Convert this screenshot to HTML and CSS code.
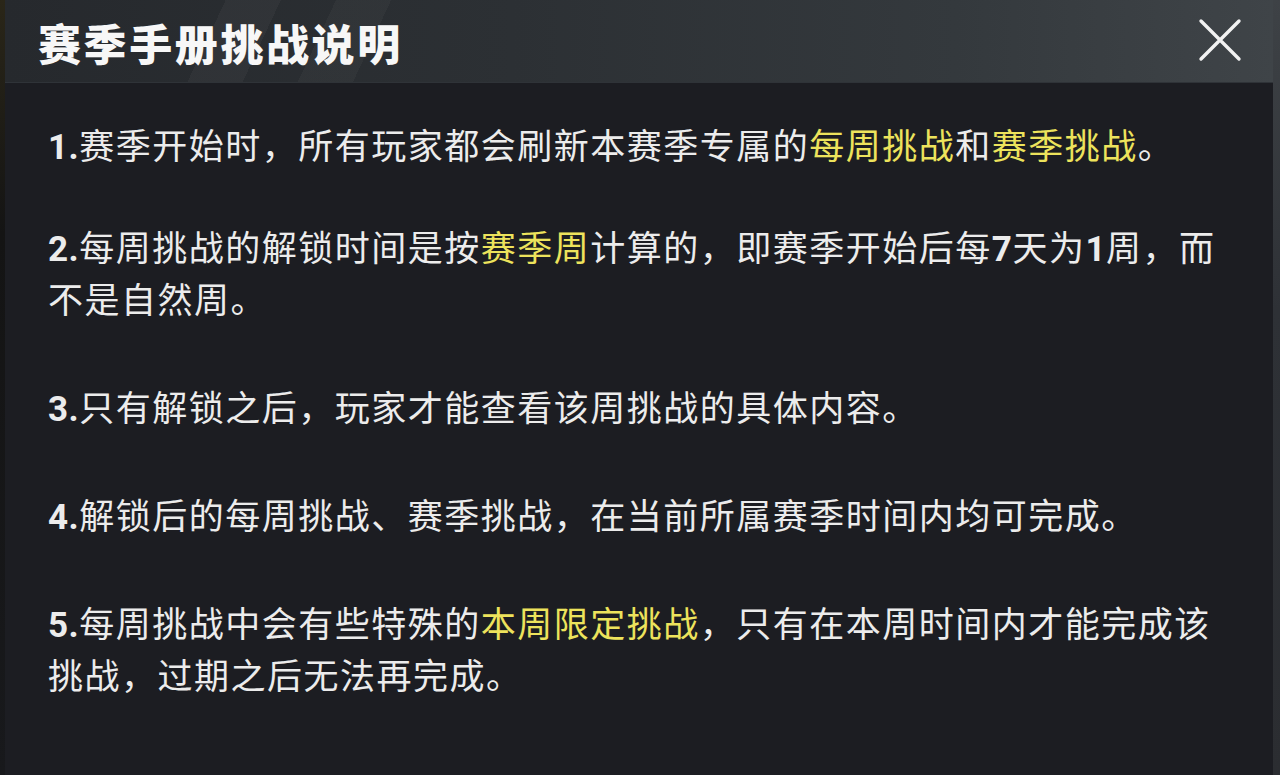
FILE: index.html
```html
<!DOCTYPE html>
<html lang="zh-CN">
<head>
<meta charset="utf-8">
<title>赛季手册挑战说明</title>
<link rel="stylesheet" href="styles.css">
</head>
<body>
<div class="screen">
  <div class="edge-left"></div>
  <div class="panel">
    <header class="panel-head">
      <h1 class="title">赛季手册挑战说明</h1>
      <button class="close" aria-label="关闭">
        <svg width="46" height="46" viewBox="0 0 46 46"><path d="M4 4 L42 42 M42 4 L4 42" stroke="#f2f2f2" stroke-width="3.4" stroke-linecap="round" fill="none"/></svg>
      </button>
    </header>
    <div class="panel-body">
      <p class="rule first"><b class="num">1.</b>赛季开始时，所有玩家都会刷新本赛季专属的<span class="hl">每周挑战</span>和<span class="hl">赛季挑战</span>。</p>
      <p class="rule second"><b class="num">2.</b>每周挑战的解锁时间是按<span class="hl">赛季周</span>计算的，即赛季开始后每<b class="num">7</b>天为<b class="num">1</b>周，而不是自然周。</p>
      <p class="rule"><b class="num">3.</b>只有解锁之后，玩家才能查看该周挑战的具体内容。</p>
      <p class="rule"><b class="num">4.</b>解锁后的每周挑战、赛季挑战，在当前所属赛季时间内均可完成。</p>
      <p class="rule"><b class="num">5.</b>每周挑战中会有些特殊的<span class="hl">本周限定挑战</span>，只有在本周时间内才能完成该挑战，过期之后无法再完成。</p>
    </div>
  </div>
  <div class="edge-right"></div>
</div>
</body>
</html>
```
FILE: styles.css
```css
html, body {
  margin: 0;
  padding: 0;
  width: 1280px;
  height: 775px;
  overflow: hidden;
  background: #141519;
}
.screen {
  display: flex;
  width: 1280px;
  height: 775px;
}
.edge-left {
  width: 5px;
  background: linear-gradient(180deg, #2a2618 0%, #141414 30%, #18191c 100%);
}
.edge-right {
  width: 7px;
  background: linear-gradient(180deg, #3e4246 0%, #2e3136 40%, #2b2d31 100%);
}
.panel {
  flex: 1;
  display: flex;
  flex-direction: column;
  background: #1c1d22;
}
.panel-head {
  height: 82px;
  display: flex;
  align-items: center;
  justify-content: space-between;
  padding: 0 30px 0 33px;
  background:
    linear-gradient(115deg, transparent 0 200px, rgba(255,255,255,0.035) 200px 250px, transparent 250px 300px, rgba(255,255,255,0.03) 300px 350px, transparent 350px),
    linear-gradient(90deg, #26292d 0%, #2c3034 40%, #34393d 75%, #3f4448 100%);
  border-bottom: 1px solid #2f3338;
}
.title {
  margin: 0;
  font-family: "Noto Sans CJK SC", sans-serif;
  font-weight: 900;
  font-size: 43px;
  letter-spacing: 2.6px;
  color: #f7f7f7;
  line-height: 1;
  padding-top: 2px;
}
.close {
  width: 46px;
  height: 46px;
  padding: 0;
  border: 0;
  background: none;
  display: flex;
  align-items: center;
  justify-content: center;
  margin-top: -2px;
}
.panel-body {
  padding: 35px 40px 0 43px;
  font-family: "Noto Sans CJK SC", sans-serif;
  font-size: 35px;
  letter-spacing: 1.5px;
  line-height: 52px;
  color: #ececec;
}
.rule {
  margin: 56px 0 0;
}
.rule.first {
  margin-top: 0;
}
.rule.second {
  margin-top: 50px;
}
.num {
  font-family: Roboto, "Liberation Sans", sans-serif;
  font-weight: 700;
  letter-spacing: 0.5px;
  line-height: 20px;
}
.hl {
  color: #ede35c;
}
```
